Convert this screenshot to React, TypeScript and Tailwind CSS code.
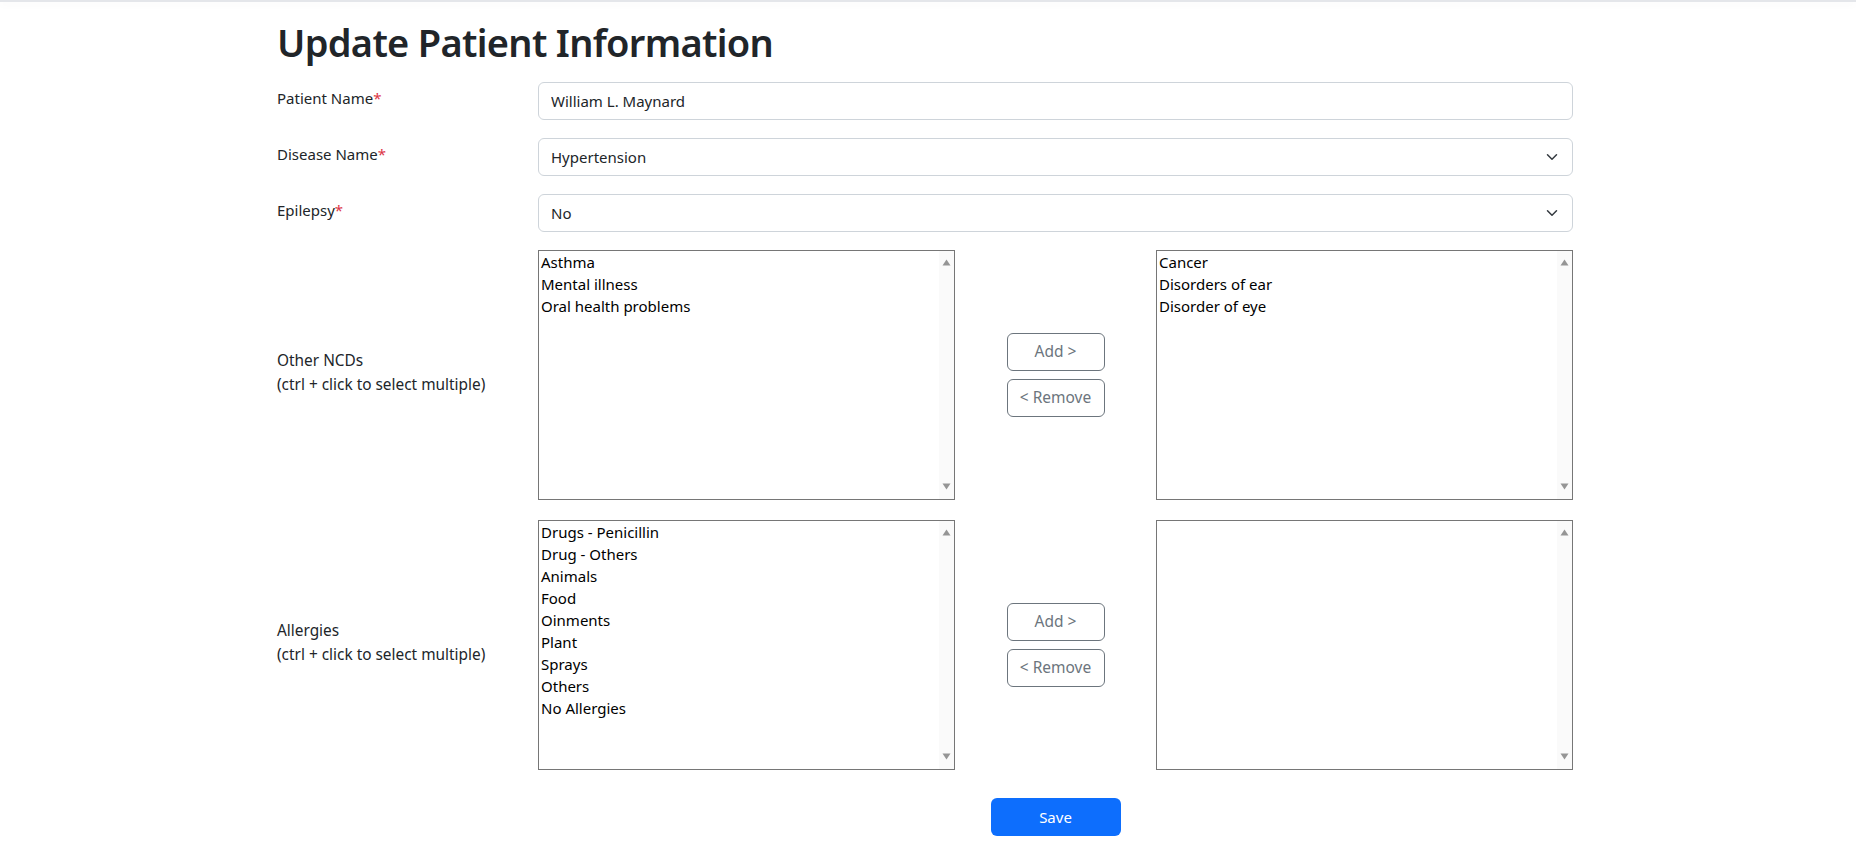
import { ReactNode } from "react"

const ncdAvailable = ["Asthma", "Mental illness", "Oral health problems"]
const ncdSelected = ["Cancer", "Disorders of ear", "Disorder of eye"]
const allergyAvailable = [
  "Drugs - Penicillin",
  "Drug - Others",
  "Animals",
  "Food",
  "Oinments",
  "Plant",
  "Sprays",
  "Others",
  "No Allergies",
]

function Required() {
  return <span className="text-[#dc3545]">*</span>
}

function FieldRow({ label, children }: { label: ReactNode; children: ReactNode }) {
  return (
    <div className="grid grid-cols-[261px_1fr] mb-[18px]">
      <label className="pt-[4px] text-[15px] leading-[24px]">{label}</label>
      {children}
    </div>
  )
}

function Chevron() {
  return (
    <svg
      className="absolute right-[12px] top-1/2 -translate-y-1/2"
      width="16"
      height="12"
      viewBox="0 0 16 16"
      preserveAspectRatio="xMidYMid meet"
    >
      <path d="m2 5 6 6 6-6" fill="none" stroke="#343a40" strokeWidth="2" strokeLinecap="round" strokeLinejoin="round" />
    </svg>
  )
}

function SelectBox({ value }: { value: string }) {
  return (
    <div className="relative h-[38px] border border-[#ced4da] rounded-[6px] px-[12px] flex items-center text-[15px]">
      <span>{value}</span>
      <Chevron />
    </div>
  )
}

function Arrow({ up }: { up?: boolean }) {
  return (
    <svg width="9" height="7" viewBox="0 0 9 7">
      <path d={up ? "M4.5 0.5 L8.5 6.5 H0.5 Z" : "M4.5 6.5 L8.5 0.5 H0.5 Z"} fill="#959595" />
    </svg>
  )
}

function ListBox({ items }: { items: string[] }) {
  return (
    <div className="h-[250px] border border-[#767676] flex bg-white">
      <div className="flex-1 text-[15px] leading-[22px] text-black">
        {items.map((item) => (
          <div key={item} className="px-[2px]">
            {item}
          </div>
        ))}
      </div>
      <div className="w-[15px] bg-[#fafafa] flex flex-col items-center justify-between pt-[8px] pb-[9px]">
        <Arrow up />
        <Arrow />
      </div>
    </div>
  )
}

function TransferRow({ label, left, right, last }: { label: string; left: string[]; right: string[]; last?: boolean }) {
  return (
    <div className={`grid grid-cols-[261px_1fr] items-center ${last ? "" : "mb-[20px]"}`}>
      <div className="text-[15.4px] leading-[24px] -mt-[4px]">
        <div>{label}</div>
        <div>(ctrl + click to select multiple)</div>
      </div>
      <div className="grid grid-cols-[417px_1fr_417px] items-center">
        <ListBox items={left} />
        <div className="flex flex-col items-center gap-[8px]">
          <button className="w-[98px] h-[38px] border border-[#6c757d] rounded-[6px] text-[#6c757d] text-[15.5px]">
            Add &gt;
          </button>
          <button className="w-[98px] h-[38px] border border-[#6c757d] rounded-[6px] text-[#6c757d] text-[15.5px]">
            &lt; Remove
          </button>
        </div>
        <ListBox items={right} />
      </div>
    </div>
  )
}

export default function App() {
  return (
    <div className="min-h-screen bg-white text-[#212529] font-['Noto_Sans',sans-serif]">
      <div className="h-[2px] bg-[#e4e6ea] shadow-[0_2px_8px_rgba(0,0,0,0.06)]" />
      <main className="ml-[277px] w-[1296px]">
        <h1 className="mt-[16px] mb-[16px] text-[38px] leading-[48px] font-semibold tracking-[-0.7px]">
          Update Patient Information
        </h1>

        <FieldRow
          label={
            <>
              Patient Name
              <Required />
            </>
          }
        >
          <input
            readOnly
            value="William L. Maynard"
            className="h-[38px] w-full border border-[#ced4da] rounded-[6px] px-[12px] text-[15px] text-[#212529] outline-none"
          />
        </FieldRow>

        <FieldRow
          label={
            <>
              Disease Name
              <Required />
            </>
          }
        >
          <SelectBox value="Hypertension" />
        </FieldRow>

        <FieldRow
          label={
            <>
              Epilepsy
              <Required />
            </>
          }
        >
          <SelectBox value="No" />
        </FieldRow>

        <TransferRow label="Other NCDs" left={ncdAvailable} right={ncdSelected} />
        <TransferRow label="Allergies" left={allergyAvailable} right={[]} last />

        <div className="grid grid-cols-[261px_1fr] mt-[28px]">
          <div />
          <div className="grid grid-cols-[417px_1fr_417px]">
            <div />
            <button className="justify-self-center w-[130px] h-[38px] bg-[#0d6efd] rounded-[6px] text-white text-[15px]">
              Save
            </button>
            <div />
          </div>
        </div>
      </main>
    </div>
  )
}
